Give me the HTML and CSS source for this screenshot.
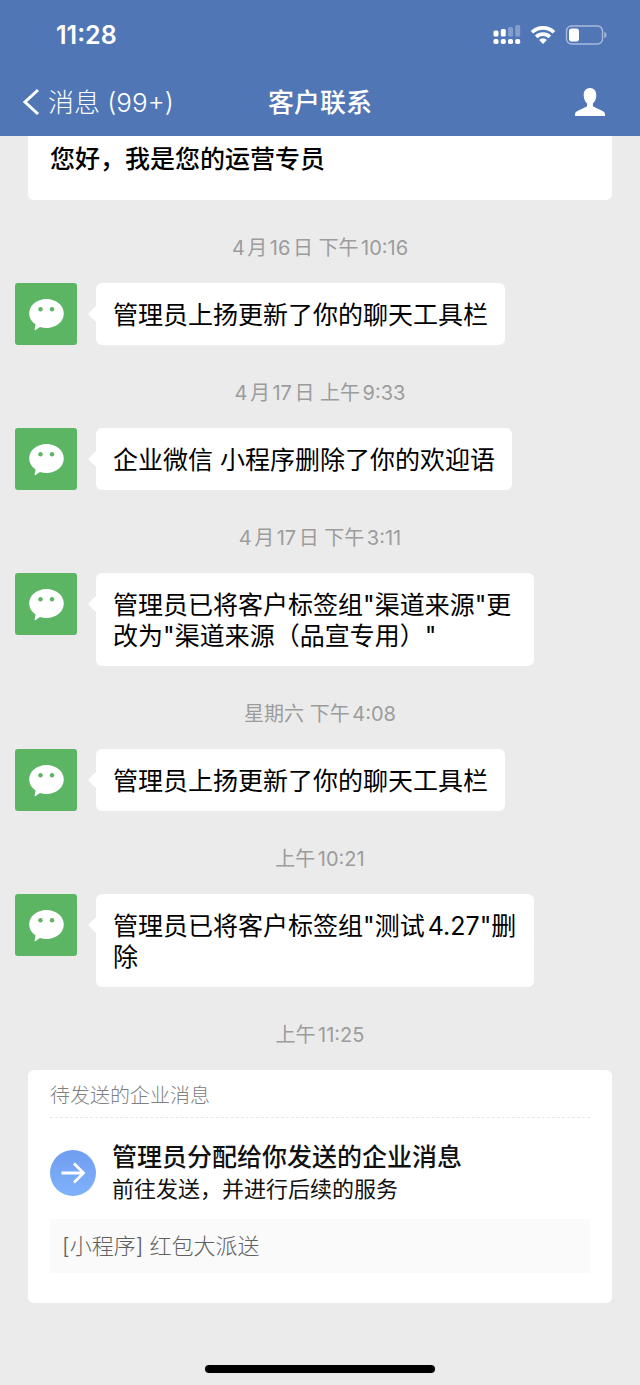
FILE: index.html
```
<!DOCTYPE html>
<html lang="zh-CN">
<head>
  <meta charset="UTF-8" />
  <meta name="viewport" content="width=device-width, initial-scale=1.0"/>
  <title>客户联系</title>
  <link rel="stylesheet" href="styles.css">
</head>
<body>

  <svg class="sprite" aria-hidden="true">
    <symbol id="bubble-face" viewBox="0 0 62 62">
      <path fill="#fff" d="M31.500 16c9.700 0 17.300 6.400 17.300 14.500S41.200 45 31.500 45c-2.400 0-4.600-.3-6.500-.9l-4.300 2.900c-.7.400-1.400 0-1.100-.8l1-4.600C16.500 38.900 14.200 35 14.200 30.500c0-8.100 7.600-14.500 17.300-14.500z"/>
      <circle cx="25.500" cy="26.300" r="2.200" fill="#5bb563"/>
      <circle cx="37" cy="26.300" r="2.200" fill="#5bb563"/>
    </symbol>
  </svg>

  <header class="header">
    <div class="status-bar">
      <span class="clock">11:28</span>
      <div class="status-icons">
        <svg width="28" height="20" viewBox="0 0 28 20" fill="#fff">
          <rect x="0.500" y="5.500" width="5" height="6" rx="1.500"/>
          <rect x="7.800" y="4" width="5" height="7.500" rx="1.500"/>
          <rect x="15" y="2" width="5" height="9.500" rx="1.500" opacity=".3"/>
          <rect x="22.200" y="0" width="5" height="11.500" rx="1.500" opacity=".3"/>
          <rect x="0.500" y="14" width="5" height="5" rx="1.700"/>
          <rect x="7.800" y="14" width="5" height="5" rx="1.700"/>
          <rect x="15" y="14" width="5" height="5" rx="1.700"/>
          <rect x="22.200" y="14" width="5" height="5" rx="1.700"/>
        </svg>
        <svg width="26" height="20" viewBox="0 0 26 20" fill="none" stroke="#fff" stroke-width="3.600">
          <path d="M2 7.300a15.800 15.800 0 0 1 22 0"/>
          <path d="M6.200 11.900a9.800 9.800 0 0 1 13.600 0"/>
          <path fill="#fff" stroke="none" d="M13 18.900l-3.900-4a5.600 5.600 0 0 1 7.800 0z"/>
        </svg>
        <svg width="42" height="20" viewBox="0 0 42 20" fill="#fff">
          <rect x="1.500" y="1" width="36" height="18" rx="5" fill="none" stroke="#fff" stroke-width="1.400" opacity=".5"/>
          <rect x="4" y="3.500" width="10" height="13" rx="2.800"/>
          <path opacity=".5" d="M39.300 6.800c1.800.8 2.200 2 2.200 3.200s-.4 2.400-2.200 3.200z"/>
        </svg>
      </div>
    </div>
    <nav class="nav-bar">
      <a class="back" href="#">
        <svg width="18" height="28" viewBox="0 0 18 28" fill="none" stroke="#fff" stroke-width="3">
          <path d="M16 2L3 14l13 12"/>
        </svg>
        <span>消息 (99+)</span>
      </a>
      <h1>客户联系</h1>
      <button class="profile" type="button" aria-label="客户资料">
        <svg width="30" height="28" viewBox="0 0 30 28" fill="#fff">
          <path d="M15 0c4 0 6.300 3 6.300 7.200 0 3.400-1.300 6.500-3.400 8.300v1.700c0 1 .5 1.500 1.400 1.900l7.800 3.600c2 .9 2.900 2 2.900 3.700v1.600H0v-1.600c0-1.700.9-2.800 2.900-3.700l7.800-3.600c.9-.4 1.400-.9 1.400-1.900v-1.700c-2.100-1.800-3.400-4.900-3.400-8.300C8.700 3 11 0 15 0z"/>
        </svg>
      </button>
    </nav>
  </header>

  <main class="chat">
    <div class="card welcome">您好，我是您的运营专员</div>

    <time class="time">4月16日 下午10:16</time>
    <div class="message">
      <svg class="avatar"><use href="#bubble-face"/></svg>
      <p class="bubble">管理员上扬更新了你的聊天工具栏</p>
    </div>

    <time class="time">4月17日 上午9:33</time>
    <div class="message">
      <svg class="avatar"><use href="#bubble-face"/></svg>
      <p class="bubble">企业微信 小程序删除了你的欢迎语</p>
    </div>

    <time class="time">4月17日 下午3:11</time>
    <div class="message">
      <svg class="avatar"><use href="#bubble-face"/></svg>
      <p class="bubble">管理员已将客户标签组"渠道来源"更改为"渠道来源（品宣专用）"</p>
    </div>

    <time class="time">星期六 下午4:08</time>
    <div class="message">
      <svg class="avatar"><use href="#bubble-face"/></svg>
      <p class="bubble">管理员上扬更新了你的聊天工具栏</p>
    </div>

    <time class="time">上午10:21</time>
    <div class="message">
      <svg class="avatar"><use href="#bubble-face"/></svg>
      <p class="bubble">管理员已将客户标签组"测试4.27"删除</p>
    </div>

    <time class="time">上午11:25</time>
    <section class="card task">
      <h2>待发送的企业消息</h2>
      <a class="task-link" href="#">
        <svg class="task-icon" width="46" height="46" viewBox="0 0 46 46">
          <defs>
            <linearGradient id="blue" x1="0" y1="0" x2="0" y2="1">
              <stop offset="0" stop-color="#6f9df0"/>
              <stop offset="1" stop-color="#7fb2fb"/>
            </linearGradient>
          </defs>
          <circle cx="23" cy="23" r="23" fill="url(#blue)"/>
          <path fill="none" stroke="#fff" stroke-width="2.800" d="M11.500 23H33M24 13.500l9.500 9.500-9.500 9.500"/>
        </svg>
        <div>
          <h3>管理员分配给你发送的企业消息</h3>
          <p>前往发送，并进行后续的服务</p>
        </div>
      </a>
      <div class="attachment">[小程序] 红包大派送</div>
    </section>
  </main>

  <div class="home-indicator"></div>

</body>
</html>
```
FILE: styles.css
```
* {
  box-sizing: border-box;
  margin: 0;
  padding: 0;
}

body {
  display: flex;
  flex-direction: column;
  min-height: 100vh;
  background-color: #ebebeb;
  color: #111;
  font-family: Inter, 'Noto Sans CJK SC', sans-serif;
  font-size: 25px;
  line-height: 31px;
  text-autospace: normal;
}

a {
  color: inherit;
  text-decoration: none;
}

.sprite {
  position: absolute;
  width: 0;
  height: 0;
}

/* header */
.header {
  background-color: #5076b6;
  color: #fff;
}

.status-bar {
  display: flex;
  justify-content: space-between;
  align-items: center;
  height: 68px;
  padding: 2px 33px 0 56px;
}

.clock {
  font-size: 25px;
  font-weight: 600;
}

.status-icons {
  display: flex;
  gap: 9px;
}

.nav-bar {
  display: grid;
  grid-template-columns: 1fr auto 1fr;
  align-items: center;
  height: 68px;
  padding: 0 22px;
  font-size: 26px;
}

.back {
  display: flex;
  align-items: center;
  gap: 8px;
  font-weight: 300;
}

.nav-bar h1 {
  font-size: 26px;
  font-weight: 500;
}

.profile {
  display: flex;
  justify-self: end;
  padding: 0 13px;
  border: none;
  background: none;
  cursor: pointer;
}

/* chat */
.chat {
  flex: 1;
}

.card {
  margin: 0 28px;
  padding: 0 22px;
  background-color: #fff;
  border-radius: 6px;
}

.welcome {
  padding-top: 8px;
  padding-bottom: 25px;
  border-radius: 0 0 6px 6px;
  color: #000;
  font-weight: 500;
}

.time {
  display: block;
  padding: 36px 0 23px;
  color: #9c9c9c;
  font-size: 20px;
  line-height: 24px;
  text-align: center;
}

.message {
  display: flex;
  align-items: flex-start;
  gap: 19px;
  padding: 0 106px 0 15px;
}

.avatar {
  flex: none;
  width: 62px;
  height: 62px;
  border-radius: 3px;
  background-color: #5bb563;
}

.bubble {
  position: relative;
  padding: 17px 17px 14px;
  background-color: #fff;
  border-radius: 6px;
  color: #000;
}

.bubble::before {
  content: "";
  position: absolute;
  top: 23px;
  left: -8px;
  border: 8px solid transparent;
  border-left: none;
  border-right-color: #fff;
}

/* task card */
.task {
  padding-top: 11px;
  padding-bottom: 30px;
}

.task h2 {
  padding-bottom: 5px;
  border-bottom: 1px dashed #e8e8e8;
  color: #808080;
  font-size: 20px;
  font-weight: 300;
}

.task-link {
  display: flex;
  align-items: center;
  gap: 16px;
  padding: 22px 0 14px;
}

.task-icon {
  flex: none;
}

.task h3 {
  font-size: 25px;
  font-weight: 500;
  line-height: 34px;
}

.task p {
  font-size: 22px;
}

.attachment {
  padding: 12px 12px 11px;
  background-color: #fafafa;
  color: #606060;
  font-size: 22px;
  font-weight: 300;
}

.home-indicator {
  width: 36%;
  height: 8px;
  margin: 0 auto 12px;
  border-radius: 4px;
  background-color: #000;
}
```
